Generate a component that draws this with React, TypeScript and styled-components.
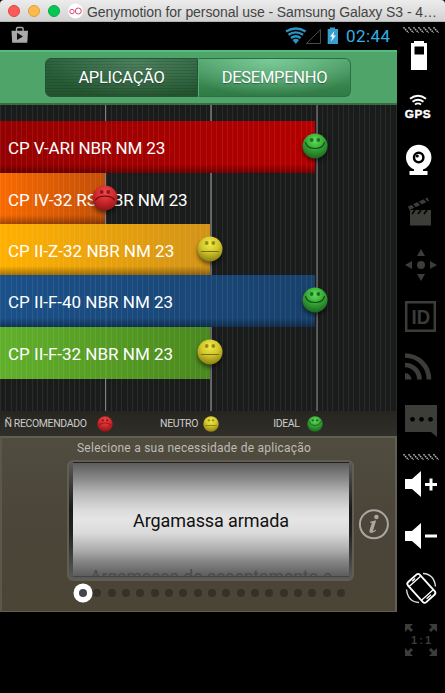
import React from "react";
import styled, { createGlobalStyle } from "styled-components";

const Global = createGlobalStyle`
  * { box-sizing: border-box; }
  body { margin: 0; background: #000; font-family: Roboto, "Liberation Sans", sans-serif; overflow: hidden; }
  svg { display: block; }
`;

const Window = styled.div`
  width: 445px;
  height: 693px;
  background: #000;
  overflow: hidden;
`;

const TitleBar = styled.header`
  display: flex;
  align-items: center;
  height: 22px;
  padding-left: 8px;
  background: linear-gradient(#ececec, #d2d2d2);
  border-bottom: 1px solid #b4b4b4;
  border-radius: 4px 4px 0 0;
`;

const Light = styled.i<{ $fill: string; $edge: string }>`
  width: 12px;
  height: 12px;
  margin-right: 8px;
  border-radius: 50%;
  background: ${(p) => p.$fill};
  border: 1px solid ${(p) => p.$edge};
`;

const Title = styled.span`
  margin-left: 4px;
  padding-top: 2px;
  font: 14px/20px "Liberation Sans", Arial, sans-serif;
  letter-spacing: -0.08px;
  color: #444;
  white-space: nowrap;
`;

const Body = styled.div`
  display: flex;
`;

const Screen = styled.main`
  width: 397px;
`;

const StatusBar = styled.div`
  display: flex;
  align-items: center;
  height: 28px;
`;

const StatusIcons = styled.svg`
  flex: none;
  width: 346px;
  height: 28px;
`;

const Clock = styled.span`
  font-size: 17px;
  letter-spacing: 0.45px;
  line-height: 28px;
  color: #33b0e0;
`;

const Tabs = styled.nav`
  display: flex;
  justify-content: center;
  height: 55px;
  padding: 6px 1px 0 0;
  background: #4fa569;
  border-top: 2px solid #53bd7c;
  border-bottom: 2px solid #3b6b42;
`;

const Tab = styled.button<{ $on?: boolean }>`
  width: 153px;
  height: 39px;
  padding: 0;
  border: 1px solid ${(p) => (p.$on ? "#245335" : "#2b7043")};
  border-left-color: ${(p) => (p.$on ? "#245335" : "#55ad74")};
  border-radius: ${(p) => (p.$on ? "6px 0 0 6px" : "0 6px 6px 0")};
  background: ${(p) =>
    p.$on
      ? `repeating-linear-gradient(transparent 0 2px, rgba(0,0,0,.1) 2px 3px),
         radial-gradient(ellipse 60% 95% at 60% 10%, #4c7f5c, rgba(70,120,85,0)), linear-gradient(#2b6340, #24552f)`
      : "radial-gradient(ellipse 65% 100% at 48% 0, #7acb98, rgba(110,190,140,0)), linear-gradient(#4f9e68, #2f7a45)"};
  color: #fff;
  font: 16.5px/37px Roboto, sans-serif;
  letter-spacing: -0.28px;
  text-shadow: 0 1px 1px rgba(0, 0, 0, 0.35);
`;

const Chart = styled.section`
  position: relative;
  height: 306px;
  padding-top: 16px;
  background:
    linear-gradient(90deg, transparent 105px, #777 105px 106px, transparent 106px 210px, #5f605f 210px 212px, transparent 212px 316px, #525352 316px 318px, transparent 318px),
    #1a1c1b;
`;

const Stripes = styled.div`
  position: absolute;
  inset: 0;
  background: repeating-linear-gradient(90deg, rgba(255, 255, 255, 0.07) 0 1px, transparent 1px 5.275px);
`;

const Row = styled.div<{ $h: number }>`
  position: relative;
  height: ${(p) => p.$h}px;
`;

const Bar = styled.div<{ $w: number; $from: string; $to: string; $flat?: boolean }>`
  width: ${(p) => p.$w}px;
  height: 100%;
  background:
    ${(p) => (p.$flat ? "" : "linear-gradient(transparent calc(100% - 9px), rgba(0,0,0,.36)),")}
    linear-gradient(90deg, ${(p) => p.$from}, ${(p) => p.$to});
`;

const RowLabel = styled.span<{ $ls: number }>`
  position: absolute;
  z-index: 1;
  left: 8px;
  top: 1px;
  font-size: 17px;
  line-height: 52px;
  letter-spacing: ${(p) => p.$ls}px;
  color: #fff;
  white-space: nowrap;
`;

const Marker = styled.div<{ $x: number }>`
  position: absolute;
  z-index: 2;
  left: ${(p) => p.$x - 13}px;
  top: 11.5px;
  filter: drop-shadow(0 3px 2px rgba(0, 0, 0, 0.5));
`;

const Legend = styled.div`
  display: flex;
  align-items: center;
  height: 25px;
  background: linear-gradient(#26261f, #302e29);
`;

const LegendText = styled.span<{ $w: number; $gap: number }>`
  flex: none;
  width: ${(p) => p.$w}px;
  margin-right: ${(p) => p.$gap}px;
  font-size: 10.5px;
  letter-spacing: -0.38px;
  text-align: right;
  color: #ccc;
  white-space: nowrap;
`;

const Panel = styled.section`
  height: 176px;
  border: 2px solid #625e50;
  border-left-color: #5b574b;
  border-bottom-width: 1px;
  background: linear-gradient(#504c40, #4b4438 60%, #4b4536);
`;

const Prompt = styled.p`
  margin: 0 0 0 75px;
  height: 22px;
  font-size: 12px;
  line-height: 20px;
  letter-spacing: 0.24px;
  color: #bebcb6;
  white-space: nowrap;
`;

const PickerRow = styled.div`
  display: flex;
  align-items: center;
  height: 121px;
  padding-left: 65px;
  gap: 3px;
`;

const PickerFrame = styled.div`
  width: 287px;
  height: 121px;
  border: 2px solid #615d50;
  border-radius: 6px;
  padding: 0 3px 2px 4px;
  background: linear-gradient(#5a5a5a, #1b1b1b 40%, #222 60%, #5b5b5b);
`;

const Wheel = styled.div`
  height: 115px;
  overflow: hidden;
  border-top: 1px solid #222;
  border-bottom: 1px solid #444;
  background: linear-gradient(#5c5c5c, #898989 14%, #b8b8b8 27%, #dcdcdc 42%, #e5e5e5 50%, #dadada 62%, #adadad 77%, #828282 88%, #5d5d5d);
  color: #111;
  text-align: center;
`;

const Choice = styled.div`
  height: 104px;
  font-size: 18px;
  line-height: 116px;
  letter-spacing: -0.1px;
`;

const NextChoice = styled.div`
  height: 20px;
  font-size: 17.5px;
  line-height: 20px;
  color: #4b4b4b;
  white-space: nowrap;
`;

const Dots = styled.div`
  display: flex;
  align-items: center;
  gap: 6.33px;
  height: 20px;
  margin: 2px 0 0 77px;
`;

const Dot = styled.i<{ $on?: boolean }>`
  flex: none;
  width: 8px;
  height: 8px;
  border-radius: 50%;
  background: ${(p) => (p.$on ? "#46464a" : "#35312a")};
  box-shadow: ${(p) => (p.$on ? "0 0 0 5.5px #fff" : "none")};
`;

const Sidebar = styled.aside`
  width: 48px;
  padding-top: 5px;
`;

type Mood = "sad" | "flat" | "happy";
const moods: Record<Mood, { c: [string, string, string]; ink: string; mouth: string }> = {
  sad: { c: ["#f04a4c", "#d3292d", "#8e1519"], ink: "#6b0d12", mouth: "M3.500 14.800C7 9.800 19 9.800 22.500 14.800" },
  flat: { c: ["#f4ec48", "#d2c62a", "#8b8113"], ink: "#777010", mouth: "M4.500 15.500h17" },
  happy: { c: ["#5fe05a", "#36a635", "#1c6820"], ink: "#12501a", mouth: "M3.500 9.500C6 17.500 20 17.500 22.500 9.500" },
};

function Face({ mood, size = 26 }: { mood: Mood; size?: number }) {
  const m = moods[mood];
  const id = `face-${mood}-${size}`;
  return (
    <svg width={size} height={size} viewBox="0 0 26 26">
      <defs>
        <radialGradient id={id} cx=".5" cy=".28" r=".72">
          <stop offset="0" stopColor={m.c[0]} />
          <stop offset=".5" stopColor={m.c[1]} />
          <stop offset="1" stopColor={m.c[2]} />
        </radialGradient>
      </defs>
      <circle cx="13" cy="13" r="12.5" fill={`url(#${id})`} />
      <circle cx="9.7" cy="7" r="1.9" fill={m.ink} opacity=".75" />
      <circle cx="16.3" cy="7" r="1.9" fill={m.ink} opacity=".75" />
      <path d={m.mouth} fill="none" stroke={m.ink} strokeWidth="1.2" strokeLinecap="round" />
    </svg>
  );
}

const bars: { label: string; ls: number; w: number; h: number; from: string; to: string; mood: Mood; flat?: boolean }[] = [
  { label: "CP V-ARI NBR NM 23", ls: -0.12, w: 315, h: 52, from: "#950000", to: "#b40000", mood: "happy" },
  { label: "CP IV-32 RS NBR NM 23", ls: -0.1, w: 105, h: 51, from: "#f96a00", to: "#c24f08", mood: "sad" },
  { label: "CP II-Z-32 NBR NM 23", ls: 0.02, w: 210, h: 51, from: "#ffb000", to: "#d29318", mood: "flat" },
  { label: "CP II-F-40 NBR NM 23", ls: 0, w: 315, h: 52, from: "#1b5089", to: "#18416c", mood: "happy" },
  { label: "CP II-F-32 NBR NM 23", ls: 0, w: 210, h: 52, from: "#61b02b", to: "#4a881e", mood: "flat", flat: true },
];

/* Each tool icon is drawn in window coordinates; y and h give its slice of the sidebar. */
function Tool({ y, h, children }: { y: number; h: number; children: React.ReactNode }) {
  return (
    <svg width="48" height={h} viewBox={`397 ${y} 48 ${h}`} fill="#fff">
      {children}
    </svg>
  );
}

function Hatch({ y, h }: { y: number; h: number }) {
  return (
    <Tool y={y} h={h}>
      <path
        d={[0, 1, 2, 3, 4, 5, 6].map((i) => `M${403.5 + i * 5} ${y + h / 2 - 2.7}l5 5.4`).join("")}
        stroke="#b5b5b5"
        strokeWidth="1.5"
        strokeDasharray="1.6 .7"
      />
    </Tool>
  );
}

const dim = "#3c3c38";

export default function App() {
  return (
    <Window>
      <Global />
      <TitleBar>
        <Light $fill="#fc5b57" $edge="#e0443f" />
        <Light $fill="#fdb94c" $edge="#dfa03a" />
        <Light $fill="#05c754" $edge="#08a945" />
        <svg width="15" height="16" viewBox="0 0 15 16">
          <circle cx="7.5" cy="8" r="7.5" fill="#fff" />
          <circle cx="4" cy="8.6" r="2.2" fill="none" stroke="#e0447c" strokeWidth="1" />
          <circle cx="10.3" cy="8" r="3" fill="none" stroke="#e0447c" strokeWidth="1" />
        </svg>
        <Title>Genymotion for personal use - Samsung Galaxy S3 - 4…</Title>
      </TitleBar>
      <Body>
        <Screen>
          <StatusBar>
            <StatusIcons viewBox="0 22 346 28">
              <path d="M16.500 31v-2.200q0-1.300 1.300-1.300h4q1.300 0 1.300 1.300V31" fill="none" stroke="#a9a9a9" strokeWidth="1.4" />
              <path d="M11.500 30.800H28l-.7 12H12.200z" fill="#a9a9a9" />
              <path d="M17 32.800v7.200l6-3.600z" fill="#111" />
              <g fill="none" stroke="#2c94c4" strokeWidth="2.3">
                <path d="M286 31.500q10-6 19.600 0" />
                <path d="M288.500 34.800q7.300-5 14.600 0" />
                <path d="M291 38q4.800-3.600 9.600 0" />
              </g>
              <path d="M292.500 40q3.300-2.500 6.600 0l-3.300 4z" fill="#2c94c4" />
              <path d="M306.500 43.500h14V29.500z" fill="none" stroke="#4b4b4b" />
              <path d="M327.700 29h2.300v-1.500h5V29h3v15h-10.300z" fill="#359fcf" />
              <path d="M334.500 31l-4.500 5.500h2.500l-1.500 5 4.800-6h-2.600z" fill="#fff" />
            </StatusIcons>
            <Clock>02:44</Clock>
          </StatusBar>
          <Tabs>
            <Tab $on>APLICAÇÃO</Tab>
            <Tab>DESEMPENHO</Tab>
          </Tabs>
          <Chart>
            {bars.map((b) => (
              <Row key={b.label} $h={b.h}>
                <Bar $w={b.w} $from={b.from} $to={b.to} $flat={b.flat} />
                <RowLabel $ls={b.ls}>{b.label}</RowLabel>
                <Marker $x={b.w}>
                  <Face mood={b.mood} />
                </Marker>
              </Row>
            ))}
            <Stripes />
          </Chart>
          <Legend>
            <LegendText $w={86.5} $gap={10}>Ñ RECOMENDADO</LegendText>
            <Face mood="sad" size={16} />
            <LegendText $w={85.5} $gap={4.5}>NEUTRO</LegendText>
            <Face mood="flat" size={16} />
            <LegendText $w={81} $gap={7}>IDEAL</LegendText>
            <Face mood="happy" size={16} />
          </Legend>
          <Panel>
            <Prompt>Selecione a sua necessidade de aplicação</Prompt>
            <PickerRow>
              <PickerFrame>
                <Wheel>
                  <Choice>Argamassa armada</Choice>
                  <NextChoice>Argamassa de assentamento e</NextChoice>
                </Wheel>
              </PickerFrame>
              <svg width="34" height="40" viewBox="0 -3 34 40">
                <circle cx="16.900" cy="20.300" r="14" fill="none" stroke="#aaa8a2" strokeWidth="2" />
                <circle cx="19.400" cy="13" r="2.200" fill="#aaa8a2" />
                <path d="M13.200 17.800l6-1.500-3 9.800q-.3 1.300.6.900l1.800-1.500.6.700q-2.600 3-5 2.900-2.400-.2-1.600-3l2.100-6.600q.2-.8-.6-.8h-.9z" fill="#aaa8a2" />
              </svg>
            </PickerRow>
            <Dots>
              {Array.from({ length: 19 }, (_, i) => (
                <Dot key={i} $on={i === 0} />
              ))}
            </Dots>
          </Panel>
        </Screen>
        <Sidebar>
          <Hatch y={27} h={6} />
          <Tool y={33} h={48}>
            <path fillRule="evenodd" d="M411 43h3v-2h10v2h3v27h-16zM414.500 46.500v8h9.500v-8z" />
          </Tool>
          <Tool y={81} h={52}>
            <g fill="none" stroke="#fff" strokeWidth="1.9">
              <path d="M410 98.800q8-6 16 0" />
              <path d="M412.500 101.700q5.500-4 11 0" />
              <path d="M415 104.500q3-2.200 6 0" />
            </g>
            <text x="404.700" y="118" fontFamily="Liberation Sans, sans-serif" fontWeight="700" fontSize="11.800" stroke="#fff" strokeWidth=".4" textLength="26">GPS</text>
          </Tool>
          <Tool y={133} h={53}>
            <circle cx="418.700" cy="157.500" r="12.700" />
            <path d="M409.500 171h18v4h-18zM414 168h9v4h-9z" />
            <circle cx="418.700" cy="157.500" r="4.700" fill="none" stroke="#000" strokeWidth="2.500" />
            <circle cx="418.700" cy="157.500" r="2.500" />
            <circle cx="417.300" cy="156" r="1.500" fill="#000" />
          </Tool>
          <Tool y={186} h={52}>
            <g fill={dim}>
              <path d="M410 210h21v15.500h-21z" />
              <path d="M408 206.500l19.500-9 1.500 3.500-19.500 9z" />
            </g>
            <path d="M412 204l3.500 4M418 201.500l3.500 4M424 198.500l3.500 4M415 210l-3 4M421 210l-3 4M427 210l-3 4" stroke="#000" strokeWidth="1.600" />
          </Tool>
          <Tool y={238} h={52}>
            <g fill={dim}>
              <circle cx="421" cy="265" r="4" />
              <path d="M421 249l4 7h-8zM421 281l4-7h-8zM405 265l7-4v8zM437 265l-7-4v8z" />
            </g>
          </Tool>
          <Tool y={290} h={52}>
            <path d="M406.200 302.200h28.600v28.600h-28.600z" fill="none" stroke={dim} strokeWidth="2.500" />
            <text x="411.500" y="324" fontFamily="Liberation Sans, sans-serif" fontWeight="700" fontSize="20" fill={dim} textLength="18.500" lengthAdjust="spacingAndGlyphs">ID</text>
          </Tool>
          <Tool y={342} h={52}>
            <g fill="none" stroke={dim} strokeWidth="4.700">
              <path d="M405 355.500a24 24 0 0 1 24 24" />
              <path d="M405 365a14.500 14.500 0 0 1 14.500 14.500" />
            </g>
            <path d="M405 373a6.500 6.500 0 0 1 6.500 6.500H405z" fill={dim} />
          </Tool>
          <Tool y={394} h={56}>
            <path d="M405 405h32v32l-6-5h-26z" fill={dim} />
            <g fill="#000">
              <circle cx="412.500" cy="419.300" r="2.400" />
              <circle cx="421.500" cy="419.300" r="2.400" />
              <circle cx="430.500" cy="419.300" r="2.400" />
            </g>
          </Tool>
          <Hatch y={450} h={14} />
          <Tool y={464} h={46}>
            <path d="M405 479h7l9-8v26l-9-8h-7zM425 483h12v3h-12zM429.500 478.500h3v12h-3z" />
          </Tool>
          <Tool y={510} h={52}>
            <path d="M405 531h7l9-8v26l-9-8h-7zM425 534.500h12v3h-12z" />
          </Tool>
          <Tool y={562} h={52}>
            <g transform="rotate(-42 421 588)" fill="none" stroke="#fff">
              <rect x="413" y="575" width="16" height="27" rx="2.500" strokeWidth="1.800" />
              <path d="M413.500 579h15M413.500 597.500h15" strokeWidth="1.300" />
              <path d="M418 599.700h6M419 577h4" strokeWidth="1.300" />
            </g>
            <path d="M423 573.500q11 .5 12.500 13M419 602.500q-11-.5-12.500-13" fill="none" stroke="#ddd" strokeWidth="1.400" />
          </Tool>
          <Tool y={614} h={52}>
            <g fill={dim} stroke={dim}>
              <path stroke="none" d="M405 624h8l-8 8zM437 624h-8l8 8zM405 656h8l-8-8zM437 656h-8l8-8z" />
              <path d="M407 626l5 5M435 626l-5 5M407 654l5-5M435 654l-5-5" strokeWidth="3" />
            </g>
            <text x="411" y="644" fontFamily="Liberation Sans, sans-serif" fontWeight="700" fontSize="11" fill={dim} textLength="20">1:1</text>
          </Tool>
        </Sidebar>
      </Body>
    </Window>
  );
}
